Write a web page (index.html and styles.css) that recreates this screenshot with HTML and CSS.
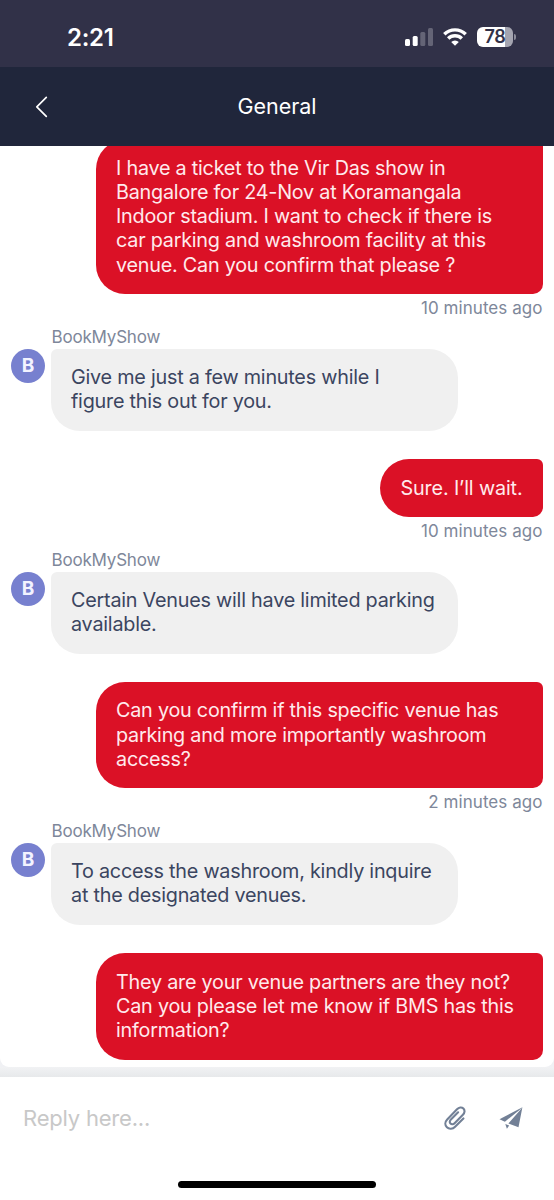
FILE: index.html
```html
<!DOCTYPE html>
<html lang="en">
<head>
<meta charset="utf-8">
<title>General</title>
<link rel="stylesheet" href="styles.css">
</head>
<body>
<div class="screen">
  <div class="status">
    <span class="clock">2:21</span>
    <div class="indicators">
      <svg class="signal" width="28" height="18" viewBox="0 0 28 18" fill="#fff"><rect x="0" y="11" width="5" height="7" rx="1.5"/><rect x="7.7" y="8" width="5" height="10" rx="1.5"/><rect x="15.3" y="4" width="5" height="14" rx="1.5" opacity=".25"/><rect x="23" y="0" width="5" height="18" rx="1.5" opacity=".25"/></svg>
      <svg class="wifi" width="24" height="18" viewBox="0 0 24 18" fill="none" stroke="#fff" stroke-width="3.4"><path d="M1.3 6.3a15.2 15.2 0 0 1 21.4 0"/><path d="M5.2 10.5a9.6 9.6 0 0 1 13.6 0"/><path d="M12 17.7L8.2 14a5.3 5.3 0 0 1 7.6 0z" fill="#fff" stroke="none"/></svg>
      <div class="battery"><span class="level">78</span></div>
      <span class="cap"></span>
    </div>
  </div>
  <header class="bar">
    <svg class="back" width="14" height="22" viewBox="0 0 14 22" fill="none" stroke="#fff" stroke-width="1.7" stroke-linecap="round" stroke-linejoin="round"><path d="M11.3 1.3L1.8 10.8L11.3 20.3"/></svg>
    <h1 class="title">General</h1>
    <span></span>
  </header>
  <main class="chat">
    <div class="sent wide">I have a ticket to the Vir Das show in<br>Bangalore for 24-Nov at Koramangala<br>Indoor stadium. I want to check if there is<br>car parking and washroom facility at this<br>venue. Can you confirm that please ?</div>
    <div class="time">10 minutes ago</div>
    <div class="name">BookMyShow</div>
    <div class="incoming"><span class="avatar">B</span><div class="received">Give me just a few minutes while I<br>figure this out for you.</div></div>
    <div class="sent short">Sure. I’ll wait.</div>
    <div class="time">10 minutes ago</div>
    <div class="name">BookMyShow</div>
    <div class="incoming"><span class="avatar">B</span><div class="received">Certain Venues will have limited parking<br>available.</div></div>
    <div class="sent wide">Can you confirm if this specific venue has<br>parking and more importantly washroom<br>access?</div>
    <div class="time">2 minutes ago</div>
    <div class="name">BookMyShow</div>
    <div class="incoming"><span class="avatar">B</span><div class="received">To access the washroom, kindly inquire<br>at the designated venues.</div></div>
    <div class="sent wide">They are your venue partners are they not?<br>Can you please let me know if BMS has this<br>information?</div>
  </main>
  <div class="divider"></div>
  <footer class="composer">
    <div class="entry">
      <span class="placeholder">Reply here...</span>
      <svg class="clip" width="22" height="24" viewBox="0 0 22 24" fill="none" stroke="#728096" stroke-width="2.1" stroke-linecap="round"><path d="M19.4 12.4L11.1 20.7C8.7 23.1 5.1 23.5 2.9 21.3C.7 19.1.9 15.8 3.2 13.4L13 3.3C14.9 1.3 17.6.8 19.4 2.6C21.1 4.3 20.8 6.9 18.9 8.8L10.6 17.2C9.3 18.5 7.6 18.7 6.5 17.6C5.4 16.5 5.6 14.9 6.9 13.6L14.1 6.3"/></svg>
      <svg class="send" width="24" height="23" viewBox="0 0 24 23" fill="#728096"><path d="M23.4.3L.5 12.3L5.9 14.7L20.2 3.2Z"/><path d="M23.4.3L19.5 20.2L9.4 16.4L20.8 3.6Z"/><path d="M6.3 16.9L10.2 18.4L7.9 21.8Z"/></svg>
    </div>
    <div class="home"></div>
  </footer>
</div>
</body>
</html>
```
FILE: styles.css
```css
* { box-sizing: border-box; }
body { margin: 0; font-family: Inter, "Liberation Sans", sans-serif; background: #fff; }
.screen { width: 554px; height: 1200px; display: flex; flex-direction: column; overflow: hidden; background: #f0f1f4; }
.status { height: 67px; flex: none; background: #313148; display: flex; justify-content: space-between; padding: 0 38px 0 67px; color: #fff; }
.clock { font-size: 24px; font-weight: 600; line-height: 30px; margin-top: 23px; letter-spacing: -.3px; }
.indicators { display: flex; align-items: flex-start; padding-top: 28px; }
.wifi { margin-left: 10px; }
.battery { width: 36px; height: 20px; margin: -1px 1px 0 10px; border-radius: 6px; background: linear-gradient(90deg, #fff 78%, #a4a4b0 78%); color: #313148; text-align: center; }
.level { display: block; font-size: 18px; font-weight: 600; line-height: 20px; letter-spacing: -.4px; }
.cap { width: 2px; height: 6px; margin-top: 6px; border-radius: 0 2px 2px 0; background: #8b8b99; }
.bar { height: 79px; flex: none; background: #20263b; color: #fff; display: grid; grid-template-columns: 100px 1fr 100px; align-items: center; }
.back { margin-left: 35px; }
.title { margin: -2px 0 0; font-size: 21.5px; line-height: 28px; font-weight: 400; text-align: center; letter-spacing: -.05px; }
.chat { height: 921px; flex: none; overflow: hidden; background: #fff; border-radius: 0 0 9px 9px; box-shadow: 0 -20px 0 #20263b; padding: 0 11.5px; display: flex; flex-direction: column; font-size: 19.8px; line-height: 24.2px; letter-spacing: -.23px; color: #3b4560; white-space: nowrap; }
.chat > * { flex: none; }
.sent { align-self: flex-end; padding: 16.3px 20px 17.3px; border-radius: 29px 6px 10px 29px; background: #db1126; color: #ffeaec; }
.wide { width: 446.5px; }
.short { letter-spacing: -.13px; }
.sent:first-child { margin-top: -6.5px; }
.time { height: 29px; line-height: 29px; text-align: right; font-size: 17px; letter-spacing: .05px; color: #7e879a; }
.name { height: 25.5px; line-height: 28px; padding-left: 40px; font-size: 17px; letter-spacing: -.2px; color: #7e879a; }
.incoming { display: flex; gap: 6px; margin: 0 0 28.6px -.5px; }
.avatar { width: 34px; height: 34px; border-radius: 50%; background: #7780cf; color: #f3f3ff; font-size: 19px; line-height: 34px; font-weight: 700; text-align: center; }
.received { width: 407px; padding: 16.3px 20px 17.3px; border-radius: 6px 29px 29px 29px; background: #f0f0f0; }
.divider { height: 10px; flex: none; background: linear-gradient(#f1f2f4, #e7e9eb); }
.composer { flex: 1; background: #fff; display: flex; flex-direction: column; align-items: center; justify-content: space-between; padding-bottom: 12px; }
.entry { width: 100%; height: 82px; display: flex; align-items: center; padding: 0 31px 0 23px; }
.placeholder { font-size: 22px; letter-spacing: -.2px; color: #c8c8c8; margin-right: auto; }
.clip { margin-right: 33px; }
.home { width: 198px; height: 7px; border-radius: 4px; background: #000; }
```
